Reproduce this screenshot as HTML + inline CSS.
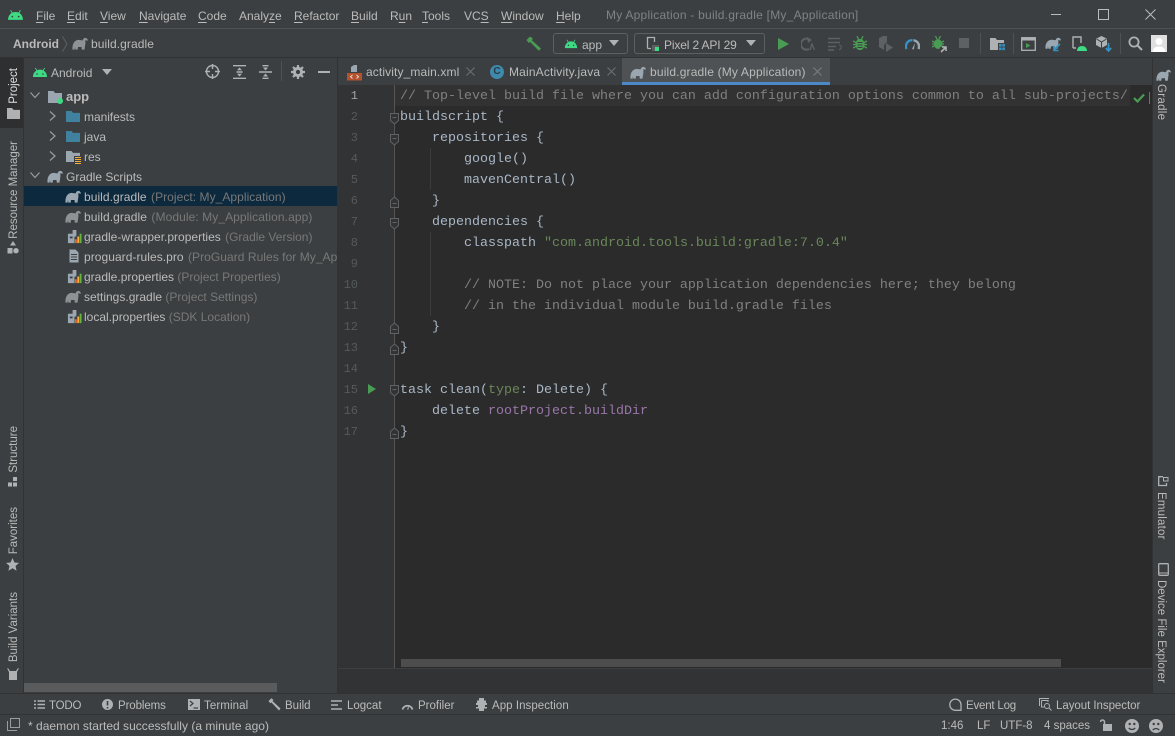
<!DOCTYPE html>
<html><head><meta charset="utf-8"><style>
*{box-sizing:border-box}
html,body{margin:0;padding:0;width:1175px;height:736px;overflow:hidden;background:#3c3f41}
body{position:relative;font-family:"Liberation Sans",sans-serif;font-size:12px;color:#bbb}
.a,.t,.v,.r,svg.i{position:absolute}
.t{white-space:nowrap;line-height:16px;height:16px}
.b{font-size:11.5px}
.g{color:#787878}
.v{writing-mode:vertical-rl;transform:rotate(180deg);white-space:nowrap;font-size:11.5px;line-height:14px;color:#bbb;left:7px}
.r{writing-mode:vertical-rl;white-space:nowrap;font-size:11.5px;line-height:14px;color:#bbb;left:1154px}
.c{position:absolute;left:400px;margin-top:1px;font:13.33px/21px "Liberation Mono",monospace;color:#a9b7c6;white-space:pre;height:21px}
.n{position:absolute;left:340px;margin-top:1px;width:18px;text-align:right;font:12px/21px "Liberation Mono",monospace;color:#555a5c;height:21px}
.cm{color:#808080}.st{color:#6a8759}.pu{color:#9876aa}.ty{color:#6a8759}
u{text-decoration-thickness:1px;text-underline-offset:2px}
</style></head><body>
<svg width="0" height="0" style="position:absolute"><defs>
<symbol id="ele" viewBox="0 0 16 12" preserveAspectRatio="none"><path d="M0.5 11.7C0 6.500 2.500 2.800 6.800 2.700C8.500 2.700 9.600 3.300 10.700 3C11.200 .7 14.300 -.2 15.600 2.200C16 3.200 15.400 3.900 14.800 3.500C14.100 2.400 13.100 3 13.300 4.200C13.700 6 13 8 12.500 11.700H9.800L9.500 9.200H6L5.700 11.700H3.400L3 9.400L2.600 11.700Z" fill="currentColor"/></symbol>
<symbol id="and" viewBox="0 0 16 12" preserveAspectRatio="none"><path d="M1 11C1 8 2.400 5.800 4.400 4.600L3 2.200L3.700 1.800L5.200 4.200C6.900 3.500 9.100 3.500 10.800 4.200L12.300 1.800L13 2.200L11.600 4.600C13.600 5.800 15 8 15 11Z" fill="#3ddc84"/><circle cx="5" cy="8" r=".8" fill="#3c3f41"/><circle cx="11" cy="8" r=".8" fill="#3c3f41"/></symbol>
<symbol id="fold" viewBox="0 0 14 12" preserveAspectRatio="none"><path d="M0 0H5.500L7 2H14V12H0Z" fill="currentColor"/></symbol>
<symbol id="prop" viewBox="0 0 16 16"><path d="M1 5H6V1H10V8H8V15H1Z" fill="#9aa7b0"/><path d="M3 8H6V10H3Z" fill="#3c3f41"/><rect x="8.500" y="11" width="2" height="4" fill="#f26522"/><rect x="11" y="8" width="2" height="7" fill="#f4af3d"/><rect x="13.500" y="5" width="2" height="10" fill="#62b543"/></symbol>
</defs></svg>

<!-- horizontal dividers -->
<div class="a" style="left:0;top:28px;width:1175px;height:1px;background:#4e5052"></div>
<div class="a" style="left:0;top:57px;width:1175px;height:1px;background:#323232"></div>

<!-- title bar -->
<svg class="i" style="left:7px;top:8px" width="17" height="13"><use href="#and" width="17" height="13"/></svg>
<div class="t" style="left:36px;top:8px"><u>F</u>ile</div>
<div class="t" style="left:67px;top:8px"><u>E</u>dit</div>
<div class="t" style="left:100px;top:8px"><u>V</u>iew</div>
<div class="t" style="left:139px;top:8px"><u>N</u>avigate</div>
<div class="t" style="left:198px;top:8px"><u>C</u>ode</div>
<div class="t" style="left:239px;top:8px">Analy<u>z</u>e</div>
<div class="t" style="left:294px;top:8px"><u>R</u>efactor</div>
<div class="t" style="left:351px;top:8px"><u>B</u>uild</div>
<div class="t" style="left:390px;top:8px">R<u>u</u>n</div>
<div class="t" style="left:422px;top:8px"><u>T</u>ools</div>
<div class="t" style="left:464px;top:8px">VC<u>S</u></div>
<div class="t" style="left:501px;top:8px"><u>W</u>indow</div>
<div class="t" style="left:556px;top:8px"><u>H</u>elp</div>
<div class="t" style="left:606px;top:7px;color:#808283;letter-spacing:.24px">My Application - build.gradle [My_Application]</div>
<div class="a" style="left:1051px;top:14px;width:10px;height:1px;background:#bbb"></div>
<div class="a" style="left:1098px;top:9px;width:11px;height:11px;border:1px solid #bbb"></div>
<svg class="i" style="left:1145px;top:9px" width="11" height="11"><path d="M.5.500L10.500 10.500M10.500.500L.5 10.500" stroke="#bbb" stroke-width="1" fill="none"/></svg>

<!-- nav bar -->
<div class="t" style="left:13px;top:36px;font-weight:bold;font-size:12px;color:#bbb">Android</div>
<svg class="i" style="left:62px;top:36px" width="6" height="16"><path d="M.5.500L5 8L.5 15.500" stroke="#5e6060" fill="none"/></svg>
<svg class="i" style="left:72px;top:37px;color:#8f9295" width="16" height="13"><use href="#ele" width="16" height="13"/></svg>
<div class="t" style="left:91px;top:36px;letter-spacing:.08px">build.gradle</div>
<svg class="i" style="left:526px;top:36px" width="16" height="15"><path d="M.5 4L4 .5L7 2.800L5.800 4.300L15 12.500L12.800 14.800L4.200 6L2.800 7Z" fill="#499c54"/></svg>
<div class="a" style="left:553px;top:33px;width:75px;height:21px;border:1px solid #5e6060;border-radius:3px"></div>
<svg class="i" style="left:564px;top:38px" width="14" height="11"><use href="#and" width="14" height="11"/></svg>
<div class="t" style="left:582px;top:37px">app</div>
<svg class="i" style="left:609px;top:40px" width="10" height="6"><path d="M0 0H10L5 6Z" fill="#afb1b3"/></svg>
<div class="a" style="left:634px;top:33px;width:131px;height:21px;border:1px solid #5e6060;border-radius:3px"></div>
<svg class="i" style="left:646px;top:36px" width="15" height="16"><path d="M1.500 12.500V1.500H8.500V6M1.500 12.500H5" stroke="#afb1b3" stroke-width="1.300" fill="none"/><rect x="6" y="9" width="7" height="6" fill="#5e5e5e"/><rect x="9" y="11" width="4" height="4" fill="#3ddc84"/></svg>
<div class="t" style="left:664px;top:37px;letter-spacing:-.15px">Pixel 2 API 29</div>
<svg class="i" style="left:746px;top:40px" width="10" height="6"><path d="M0 0H10L5 6Z" fill="#afb1b3"/></svg>

<!-- toolbar icons -->
<svg class="i" style="left:778px;top:38px" width="11" height="12"><path d="M0 0L11 6L0 12Z" fill="#499c54"/></svg>
<svg class="i" style="left:801px;top:36px" width="14" height="15"><path d="M9 4A5.500 5.500 0 1 0 8 13" stroke="#5e6164" stroke-width="2" fill="none"/><path d="M6 1L11 4L7 7Z" fill="#5e6164"/><path d="M9 14L11 8L13.500 14" stroke="#5e6164" stroke-width="1.300" fill="none"/></svg>
<svg class="i" style="left:828px;top:37px" width="15" height="14"><path d="M0 1.500H12M0 5.500H12M0 9.500H8M0 13H6" stroke="#5e6164" stroke-width="1.600"/><path d="M11 8A2 2 0 1 1 11 12.500" stroke="#5e6164" fill="none"/></svg>
<svg class="i" style="left:853px;top:36px" width="14" height="15"><ellipse cx="7" cy="8.500" rx="4.600" ry="5.600" fill="#499c54"/><path d="M0 5L14 12M14 5L0 12M0 8.500H14M4 0L5.500 3.500M10 0L8.500 3.500" stroke="#499c54" stroke-width="1.300"/><path d="M4.500 6.500H9.500M4.500 9H9.500M4.500 11.500H9.500" stroke="#3c3f41" stroke-width="1"/></svg>
<svg class="i" style="left:879px;top:36px" width="15" height="16"><path d="M0 2L4 0H8V6L5 9V14L0 11Z" fill="#5e6164"/><path d="M7 7L14 11.500L7 16Z" fill="#5e6164"/></svg>
<svg class="i" style="left:905px;top:38px" width="15" height="13"><path d="M1.500 11A6.200 6.200 0 0 1 7.500 2.200" stroke="#3592c4" stroke-width="2.400" fill="none"/><path d="M8.500 2.300A6.200 6.200 0 0 1 13.500 11" stroke="#9aa7b0" stroke-width="2.400" fill="none"/><path d="M7 11L10 5L8.800 11.500Z" fill="#9aa7b0"/></svg>
<svg class="i" style="left:932px;top:36px" width="15" height="17"><ellipse cx="6" cy="8" rx="4" ry="5" fill="#499c54"/><path d="M0 5L12 11M12 5L0 11M0 8H12M3.500 0L5 3M8.500 0L7 3" stroke="#499c54" stroke-width="1.300"/><path d="M8 11H15V17H8Z" fill="#3c3f41"/><path d="M9 16L14 11M10 11H14V15" stroke="#afb1b3" stroke-width="1.600" fill="none"/></svg>
<div class="a" style="left:959px;top:38px;width:10px;height:10px;background:#5e6164"></div>
<div class="a" style="left:980px;top:33px;width:1px;height:21px;background:#515151"></div>
<svg class="i" style="left:990px;top:37px" width="15" height="14"><path d="M0 1H5.500L7 3H14V6H8V13H0Z" fill="#afb1b3"/><rect x="9" y="7" width="2.600" height="2.600" fill="#3592c4"/><rect x="12.300" y="7" width="2.600" height="2.600" fill="#3592c4"/><rect x="9" y="10.500" width="2.600" height="2.600" fill="#3592c4"/><rect x="12.300" y="10.500" width="2.600" height="2.600" fill="#3592c4"/></svg>
<div class="a" style="left:1013px;top:33px;width:1px;height:21px;background:#515151"></div>
<svg class="i" style="left:1021px;top:37px" width="15" height="14"><rect x=".7" y=".7" width="13.600" height="12.600" fill="none" stroke="#afb1b3" stroke-width="1.300"/><rect x="1" y="1" width="13" height="2.500" fill="#afb1b3"/><path d="M5 6L9.500 8.500L5 11Z" fill="#499c54"/></svg>
<svg class="i" style="left:1045px;top:37px;color:#9aa7b0" width="16" height="12"><use href="#ele" width="16" height="12"/></svg>
<svg class="i" style="left:1052px;top:43px" width="9" height="9"><path d="M8 1L2 7M2 3V7.500H6.500" stroke="#3592c4" stroke-width="1.600" fill="none"/></svg>
<svg class="i" style="left:1072px;top:36px" width="15" height="16"><path d="M1 12V1H9V7M1 12H4" stroke="#afb1b3" stroke-width="1.400" fill="none"/><path d="M5 15C5 12 7 10 10 10C13 10 15 12 15 15Z" fill="#3ddc84"/></svg>
<svg class="i" style="left:1096px;top:36px" width="16" height="17"><path d="M5.500 0L11 2.800V9L5.500 12L0 9V2.800Z" fill="#afb1b3"/><path d="M.5 3L5.500 6L10.500 3M5.500 6V12" stroke="#3c3f41" fill="none"/><path d="M12.500 7V14.500M9.800 12L12.500 15L15.200 12" stroke="#3592c4" stroke-width="1.700" fill="none"/></svg>
<div class="a" style="left:1120px;top:33px;width:1px;height:21px;background:#515151"></div>
<svg class="i" style="left:1128px;top:36px" width="15" height="15"><circle cx="6" cy="6" r="4.600" fill="none" stroke="#afb1b3" stroke-width="1.800"/><path d="M9.500 9.500L14 14" stroke="#afb1b3" stroke-width="2"/></svg>
<svg class="i" style="left:1151px;top:35px" width="16" height="17"><rect width="16" height="17" fill="#dfdfdf"/><circle cx="8" cy="6.500" r="3.500" fill="#fff"/><path d="M1.500 17C2 12.500 5 11.500 8 11.500C11 11.500 14 12.500 14.500 17Z" fill="#fff"/></svg>

<!-- left stripe -->
<div class="a" style="left:23px;top:58px;width:1px;height:635px;background:#323232"></div>
<div class="a" style="left:0;top:58px;width:23px;height:70px;background:#2d2f30"></div>
<div class="v" style="top:68px;color:#e0e0e0">Project</div>
<svg class="i" style="left:7px;top:108px;color:#afb1b3" width="13" height="11"><use href="#fold" width="13" height="11"/></svg>
<div class="v" style="top:141px">Resource Manager</div>
<svg class="i" style="left:7px;top:241px" width="12" height="13"><path d="M6 0L9 4.500H3Z" fill="#afb1b3"/><rect x=".5" y="7" width="5" height="5.500" fill="#afb1b3"/><circle cx="9" cy="9.700" r="2.700" fill="#afb1b3"/></svg>
<div class="v" style="top:426px">Structure</div>
<svg class="i" style="left:8px;top:477px" width="10" height="10"><rect x="5" y="0" width="4" height="4" fill="#afb1b3"/><rect x="0" y="5.500" width="4" height="4" fill="#afb1b3"/><rect x="5" y="5.500" width="4" height="4" fill="#afb1b3"/></svg>
<div class="v" style="top:507px">Favorites</div>
<svg class="i" style="left:6px;top:558px" width="13" height="13"><path d="M6.500 0L8.400 4.500L13 4.900L9.500 8L10.600 12.700L6.500 10.200L2.400 12.700L3.500 8L0 4.900L4.600 4.500Z" fill="#afb1b3"/></svg>
<div class="v" style="top:592px">Build Variants</div>
<svg class="i" style="left:7px;top:668px" width="12" height="12"><path d="M1 0L3 3H9L11 0L11.800 .6L10 4V12H2V4L.2 .6Z" fill="#afb1b3"/></svg>

<!-- project header -->
<svg class="i" style="left:32px;top:66px" width="16" height="12"><use href="#and" width="16" height="12"/></svg>
<div class="t" style="left:51px;top:65px;font-size:12px">Android</div>
<svg class="i" style="left:102px;top:69px" width="10" height="6"><path d="M0 0H10L5 6Z" fill="#afb1b3"/></svg>
<svg class="i" style="left:205px;top:64px" width="15" height="15"><circle cx="7.500" cy="7.500" r="6" fill="none" stroke="#afb1b3" stroke-width="1.400"/><path d="M7.500 0V5M7.500 10V15M0 7.500H5M10 7.500H15" stroke="#afb1b3" stroke-width="1.400"/></svg>
<svg class="i" style="left:233px;top:65px" width="13" height="14"><path d="M0 .7H13M0 13.300H13M3.500 7H9.500" stroke="#afb1b3" stroke-width="1.400"/><path d="M6.500 2.500L9 5.300H4ZM6.500 11.500L9 8.700H4Z" fill="#afb1b3"/></svg>
<svg class="i" style="left:259px;top:65px" width="13" height="14"><path d="M0 7H13M3.500 .7H9.500M3.500 13.300H9.500" stroke="#afb1b3" stroke-width="1.400"/><path d="M6.500 5.500L9 2.500H4ZM6.500 8.500L9 11.500H4Z" fill="#afb1b3"/></svg>
<div class="a" style="left:281px;top:61px;width:1px;height:20px;background:#515151"></div>
<svg class="i" style="left:291px;top:65px" width="14" height="14"><circle cx="7" cy="7" r="3.600" fill="none" stroke="#afb1b3" stroke-width="3"/><path d="M7 0V3M7 11V14M0 7H3M11 7H14M2 2L4 4M10 10L12 12M12 2L10 4M4 10L2 12" stroke="#afb1b3" stroke-width="2.200"/></svg>
<div class="a" style="left:318px;top:71px;width:12px;height:2px;background:#afb1b3"></div>

<!-- tree -->
<div class="a" style="left:24px;top:186px;width:313px;height:20px;background:#0d293e"></div>
<svg class="i" style="left:30px;top:92px" width="10" height="7"><path d="M.5.500L5 5.500L9.500.500" stroke="#9a9d9f" fill="none" stroke-width="1.200"/></svg>
<svg class="i" style="left:48px;top:91px;color:#9aa7b0" width="14" height="12"><use href="#fold" width="14" height="12"/></svg>
<div class="a" style="left:57px;top:98px;width:6px;height:6px;border-radius:50%;background:#3ddc84"></div>
<div class="t" style="left:66px;top:89px;font-size:13px;font-weight:bold;color:#bbb">app</div>
<svg class="i" style="left:49px;top:111px" width="7" height="10"><path d="M1 .5L6 5L1 9.500" stroke="#9a9d9f" fill="none" stroke-width="1.200"/></svg>
<svg class="i" style="left:66px;top:111px;color:#40819f" width="14" height="11"><use href="#fold" width="14" height="11"/></svg>
<div class="t" style="left:84px;top:109px;letter-spacing:-.05px">manifests</div>
<svg class="i" style="left:49px;top:131px" width="7" height="10"><path d="M1 .5L6 5L1 9.500" stroke="#9a9d9f" fill="none" stroke-width="1.200"/></svg>
<svg class="i" style="left:66px;top:131px;color:#40819f" width="14" height="11"><use href="#fold" width="14" height="11"/></svg>
<div class="t" style="left:84px;top:129px">java</div>
<svg class="i" style="left:49px;top:151px" width="7" height="10"><path d="M1 .5L6 5L1 9.500" stroke="#9a9d9f" fill="none" stroke-width="1.200"/></svg>
<svg class="i" style="left:66px;top:151px;color:#9aa7b0" width="14" height="11"><use href="#fold" width="14" height="11"/></svg>
<svg class="i" style="left:74px;top:156px" width="7" height="8"><rect width="7" height="8" fill="#3c3f41"/><path d="M1 1.500H7M1 3.500H7M1 5.500H7M1 7.500H7" stroke="#f4af3d" stroke-width="1"/></svg>
<div class="t" style="left:84px;top:149px">res</div>
<svg class="i" style="left:30px;top:172px" width="10" height="7"><path d="M.5.500L5 5.500L9.500.500" stroke="#9a9d9f" fill="none" stroke-width="1.200"/></svg>
<svg class="i" style="left:47px;top:170px;color:#9aa7b0" width="16" height="13"><use href="#ele" width="16" height="13"/></svg>
<div class="t" style="left:66px;top:169px">Gradle Scripts</div>
<svg class="i" style="left:65px;top:190px;color:#9aa7b0" width="16" height="13"><use href="#ele" width="16" height="13"/></svg>
<div class="t" style="left:84px;top:189px;letter-spacing:.05px">build.gradle <span class="g" style="margin-left:1px">(Project: My_Application)</span></div>
<svg class="i" style="left:65px;top:210px;color:#8f9295" width="16" height="13"><use href="#ele" width="16" height="13"/></svg>
<div class="t" style="left:84px;top:209px;letter-spacing:.08px">build.gradle <span class="g" style="margin-left:1px">(Module: My_Application.app)</span></div>
<svg class="i" style="left:67px;top:229px" width="15" height="15"><use href="#prop" width="15" height="15"/></svg>
<div class="t" style="left:84px;top:229px">gradle-wrapper.properties <span class="g" style="margin-left:1px">(Gradle Version)</span></div>
<svg class="i" style="left:69px;top:249px" width="10" height="14"><path d="M.5.500H6.500L9.500 3.500V13.500H.5Z" fill="#9aa7b0"/><path d="M2 5.500H8M2 8H8M2 10.500H8" stroke="#3c3f41"/></svg>
<div class="a" style="left:84px;top:249px;width:253px;height:16px;overflow:hidden"><div class="t" style="left:0;top:0;letter-spacing:.05px">proguard-rules.pro <span class="g" style="margin-left:1px">(ProGuard Rules for My_Application)</span></div></div>
<svg class="i" style="left:67px;top:269px" width="15" height="15"><use href="#prop" width="15" height="15"/></svg>
<div class="t" style="left:84px;top:269px">gradle.properties <span class="g">(Project Properties)</span></div>
<svg class="i" style="left:65px;top:290px;color:#8f9295" width="16" height="13"><use href="#ele" width="16" height="13"/></svg>
<div class="t" style="left:84px;top:289px">settings.gradle <span class="g">(Project Settings)</span></div>
<svg class="i" style="left:67px;top:309px" width="15" height="15"><use href="#prop" width="15" height="15"/></svg>
<div class="t" style="left:84px;top:309px">local.properties <span class="g">(SDK Location)</span></div>
<div class="a" style="left:24px;top:683px;width:253px;height:9px;background:#595b5d"></div>

<!-- panel divider -->
<div class="a" style="left:337px;top:58px;width:1px;height:635px;background:#323232"></div>

<!-- tabs -->
<div class="a" style="left:622px;top:58px;width:208px;height:27px;background:#4e5254"></div>
<div class="a" style="left:622px;top:82px;width:208px;height:3px;background:#4a88c7"></div>
<svg class="i" style="left:347px;top:65px" width="15" height="16"><path d="M4 7V2L7 0H10V7Z" fill="#9aa7b0"/><rect y="8" width="15" height="7.500" fill="#b5512c"/><path d="M5.500 10L3.500 11.800L5.500 13.500M9.500 10L11.500 11.800L9.500 13.500" stroke="#ddd" fill="none"/></svg>
<div class="t" style="left:366px;top:64px;letter-spacing:.12px">activity_main.xml</div>
<svg class="i" style="left:466px;top:67px" width="9" height="9"><path d="M.5.500L8.500 8.500M8.500.500L.5 8.500" stroke="#6e7072"/></svg>
<div class="a" style="left:490px;top:65px;width:14px;height:14px;border-radius:50%;background:#3f89ad"></div>
<div class="t" style="left:490px;top:64px;width:14px;text-align:center;font-size:10px;font-weight:bold;color:#2b3a42">C</div>
<div class="t" style="left:509px;top:64px;letter-spacing:.16px">MainActivity.java</div>
<svg class="i" style="left:607px;top:67px" width="9" height="9"><path d="M.5.500L8.500 8.500M8.500.500L.5 8.500" stroke="#6e7072"/></svg>
<svg class="i" style="left:630px;top:66px;color:#9aa7b0" width="16" height="13"><use href="#ele" width="16" height="13"/></svg>
<div class="t" style="left:650px;top:64px;letter-spacing:.17px">build.gradle (My Application)</div>
<svg class="i" style="left:813px;top:67px" width="9" height="9"><path d="M.5.500L8.500 8.500M8.500.500L.5 8.500" stroke="#7b7e80"/></svg>

<!-- editor -->
<div class="a" style="left:338px;top:85px;width:815px;height:583px;background:#2b2b2b"></div>
<div class="a" style="left:338px;top:85px;width:57px;height:583px;background:#313335"></div>
<div class="a" style="left:394px;top:85px;width:1px;height:583px;background:#555"></div>
<div class="a" style="left:395px;top:85px;width:757px;height:21px;background:#323232"></div>
<div class="a" style="left:338px;top:668px;width:815px;height:25px;background:#313335"></div>
<div class="a" style="left:338px;top:668px;width:815px;height:1px;background:#3c3f41"></div>
<div class="a" style="left:401px;top:659px;width:660px;height:8px;background:#4d4d4d"></div>
<div class="a" style="left:430px;top:148px;width:1px;height:42px;background:#3b3b3b"></div>
<div class="a" style="left:430px;top:232px;width:1px;height:84px;background:#3b3b3b"></div>

<div class="n" style="top:85px;color:#a4a3a3">1</div><div class="n" style="top:106px">2</div><div class="n" style="top:127px">3</div><div class="n" style="top:148px">4</div><div class="n" style="top:169px">5</div><div class="n" style="top:190px">6</div><div class="n" style="top:211px">7</div><div class="n" style="top:232px">8</div><div class="n" style="top:253px">9</div><div class="n" style="top:274px">10</div><div class="n" style="top:295px">11</div><div class="n" style="top:316px">12</div><div class="n" style="top:337px">13</div><div class="n" style="top:358px">14</div><div class="n" style="top:379px">15</div><div class="n" style="top:400px">16</div><div class="n" style="top:421px">17</div>

<!-- fold marks -->
<svg class="i" style="left:389px;top:85px" width="12" height="360">
<g fill="#313335" stroke="#606366">
<path d="M1.500 28.500H9.500V35.500L5.500 39L1.500 35.500Z"/>
<path d="M1.500 49.500H9.500V56.500L5.500 60L1.500 56.500Z"/>
<path d="M1.500 133.500H9.500V140.500L5.500 144L1.500 140.500Z"/>
<path d="M1.500 300.500H9.500V307.500L5.500 311L1.500 307.500Z"/>
<path d="M5.500 112L9.500 115.500V122.500H1.500V115.500Z"/>
<path d="M5.500 238L9.500 241.500V248.500H1.500V241.500Z"/>
<path d="M5.500 259L9.500 262.500V269.500H1.500V262.500Z"/>
<path d="M5.500 343L9.500 346.500V353.500H1.500V346.500Z"/>
</g>
<path d="M3.500 32.500H7.500M3.500 53.500H7.500M3.500 137.500H7.500M3.500 304.500H7.500M3.500 118.500H7.500M3.500 244.500H7.500M3.500 265.500H7.500M3.500 349.500H7.500" stroke="#606366"/>
</svg>
<svg class="i" style="left:368px;top:384px" width="8" height="10"><path d="M0 0L8 5L0 10Z" fill="#499c54"/></svg>

<div class="c cm" style="top:85px">// Top-level build file where you can add configuration options common to all sub-projects/</div>
<div class="c" style="top:106px">buildscript {</div>
<div class="c" style="top:127px">    repositories {</div>
<div class="c" style="top:148px">        google()</div>
<div class="c" style="top:169px">        mavenCentral()</div>
<div class="c" style="top:190px">    }</div>
<div class="c" style="top:211px">    dependencies {</div>
<div class="c" style="top:232px">        classpath <span class="st">"com.android.tools.build:gradle:7.0.4"</span></div>
<div class="c cm" style="top:274px">        // NOTE: Do not place your application dependencies here; they belong</div>
<div class="c cm" style="top:295px">        // in the individual module build.gradle files</div>
<div class="c" style="top:316px">    }</div>
<div class="c" style="top:337px">}</div>
<div class="c" style="top:379px">task clean(<span class="ty">type</span>: Delete) {</div>
<div class="c" style="top:400px">    delete <span class="pu">rootProject.buildDir</span></div>
<div class="c" style="top:421px">}</div>

<div class="a" style="left:1130px;top:85px;width:22px;height:21px;background:#2b2b2b"></div>
<svg class="i" style="left:1133px;top:93px" width="12" height="10"><path d="M1 5L4.500 8.500L11 1.500" stroke="#499c54" stroke-width="2.200" fill="none"/></svg>
<div class="a" style="left:1149px;top:92px;width:1px;height:12px;background:#8a6d3b"></div>

<!-- right stripe -->
<div class="a" style="left:1152px;top:58px;width:1px;height:635px;background:#323232"></div>
<svg class="i" style="left:1156px;top:69px;color:#9aa7b0" width="15" height="12"><use href="#ele" width="15" height="12"/></svg>
<div class="r" style="top:84px;letter-spacing:.3px">Gradle</div>
<svg class="i" style="left:1158px;top:476px" width="11" height="12"><path d="M5 .7H.7V9.500H8.500V7" stroke="#afb1b3" stroke-width="1.300" fill="none"/><rect x="5.500" y="1.500" width="4.500" height="3.500" fill="none" stroke="#afb1b3"/></svg>
<div class="r" style="top:492px;letter-spacing:.2px">Emulator</div>
<svg class="i" style="left:1158px;top:563px" width="11" height="13"><rect x=".7" y=".7" width="9.600" height="11.600" rx="1" fill="none" stroke="#afb1b3" stroke-width="1.300"/><path d="M1 10H10" stroke="#afb1b3"/></svg>
<div class="r" style="top:580px">Device File Explorer</div>

<!-- bottom tool stripe -->
<div class="a" style="left:0;top:693px;width:1175px;height:1px;background:#323232"></div>
<svg class="i" style="left:34px;top:700px" width="11" height="10"><path d="M0 1H2M3.500 1H11M0 4.500H2M3.500 4.500H11M0 8H2M3.500 8H11" stroke="#afb1b3" stroke-width="1.600"/></svg>
<div class="t b" style="left:49px;top:698px;letter-spacing:-.2px">TODO</div>
<svg class="i" style="left:102px;top:699px" width="11" height="11"><circle cx="5.500" cy="5.500" r="5.500" fill="#afb1b3"/><path d="M5.500 2V6.500M5.500 8V9.500" stroke="#3c3f41" stroke-width="1.600"/></svg>
<div class="t b" style="left:118px;top:698px;letter-spacing:-.1px">Problems</div>
<svg class="i" style="left:188px;top:699px" width="12" height="11"><rect width="12" height="11" fill="#afb1b3"/><path d="M2 2L5 4.500L2 7" stroke="#3c3f41" fill="none" stroke-width="1.200"/><path d="M5.500 9H10" stroke="#3c3f41" stroke-width="1.200"/></svg>
<div class="t b" style="left:204px;top:698px;letter-spacing:.1px">Terminal</div>
<svg class="i" style="left:268px;top:698px" width="13" height="13"><path d="M.5 3L3.500 .3L5.500 2L4.500 3L12.500 10.500L11 12.500L3.500 4.500L2.300 5.300Z" fill="#afb1b3"/></svg>
<div class="t b" style="left:285px;top:698px">Build</div>
<svg class="i" style="left:331px;top:700px" width="11" height="10"><path d="M0 1H11M0 5H7M0 9H11" stroke="#afb1b3" stroke-width="1.600"/></svg>
<div class="t b" style="left:347px;top:698px">Logcat</div>
<svg class="i" style="left:401px;top:700px" width="13" height="10"><path d="M1.500 9.500A5.200 5.200 0 0 1 11.500 9.500" stroke="#afb1b3" stroke-width="1.800" fill="none"/><path d="M6 9.500L8 4.500L7.500 9.500Z" fill="#afb1b3"/></svg>
<div class="t b" style="left:418px;top:698px">Profiler</div>
<svg class="i" style="left:476px;top:698px" width="11" height="13"><path d="M3 0H8V2.500H10V5H11V7H9V9H11V10.500H8V13H3V10.500H0V9H2V7H0V5H1V2.500H3Z" fill="#afb1b3"/></svg>
<div class="t b" style="left:492px;top:698px;letter-spacing:.05px">App Inspection</div>
<svg class="i" style="left:949px;top:698px" width="13" height="13"><path d="M12 12.300H6.500A5.600 5.600 0 1 1 12 6.500Z" fill="none" stroke="#afb1b3" stroke-width="1.300"/></svg>
<div class="t b" style="left:966px;top:698px;letter-spacing:-.2px">Event Log</div>
<svg class="i" style="left:1039px;top:698px" width="13" height="13"><path d="M.5 8V.5H10M2.500 2.500H9V4M2.500 2.500V9H5" stroke="#afb1b3" fill="none"/><circle cx="8" cy="8" r="2.500" fill="none" stroke="#afb1b3"/><path d="M10 10L12.500 12.500" stroke="#afb1b3"/></svg>
<div class="t b" style="left:1056px;top:698px;letter-spacing:-.05px">Layout Inspector</div>

<!-- status bar -->
<div class="a" style="left:0;top:714px;width:1175px;height:1px;background:#323232"></div>
<svg class="i" style="left:7px;top:718px" width="13" height="13"><rect x="3.500" y=".5" width="9" height="9" fill="none" stroke="#9a9d9f"/><path d="M.5 3V12.500H10" fill="none" stroke="#9a9d9f"/></svg>
<div class="t" style="left:28px;top:718px;letter-spacing:.02px">* daemon started successfully (a minute ago)</div>
<div class="t b" style="left:941px;top:718px">1:46</div>
<div class="t b" style="left:977px;top:718px">LF</div>
<div class="t b" style="left:1000px;top:718px">UTF-8</div>
<div class="t b" style="left:1044px;top:718px">4 spaces</div>
<svg class="i" style="left:1100px;top:719px" width="13" height="12"><rect x="3" y="5" width="9" height="7" fill="#afb1b3"/><path d="M4.500 5V3A2 2 0 0 0 .5 3" stroke="#afb1b3" stroke-width="1.500" fill="none"/></svg>
<svg class="i" style="left:1125px;top:719px" width="14" height="14"><circle cx="7" cy="7" r="7" fill="#afb1b3"/><circle cx="4.700" cy="5" r="1.200" fill="#3c3f41"/><circle cx="9.300" cy="5" r="1.200" fill="#3c3f41"/><path d="M3.700 9Q7 12 10.300 9" stroke="#3c3f41" stroke-width="1.300" fill="none"/></svg>
<svg class="i" style="left:1149px;top:719px" width="14" height="14"><circle cx="7" cy="7" r="7" fill="#afb1b3"/><circle cx="4.700" cy="5" r="1.200" fill="#3c3f41"/><circle cx="9.300" cy="5" r="1.200" fill="#3c3f41"/><path d="M3.700 11Q7 8 10.300 11" stroke="#3c3f41" stroke-width="1.300" fill="none"/></svg>
</body></html>
